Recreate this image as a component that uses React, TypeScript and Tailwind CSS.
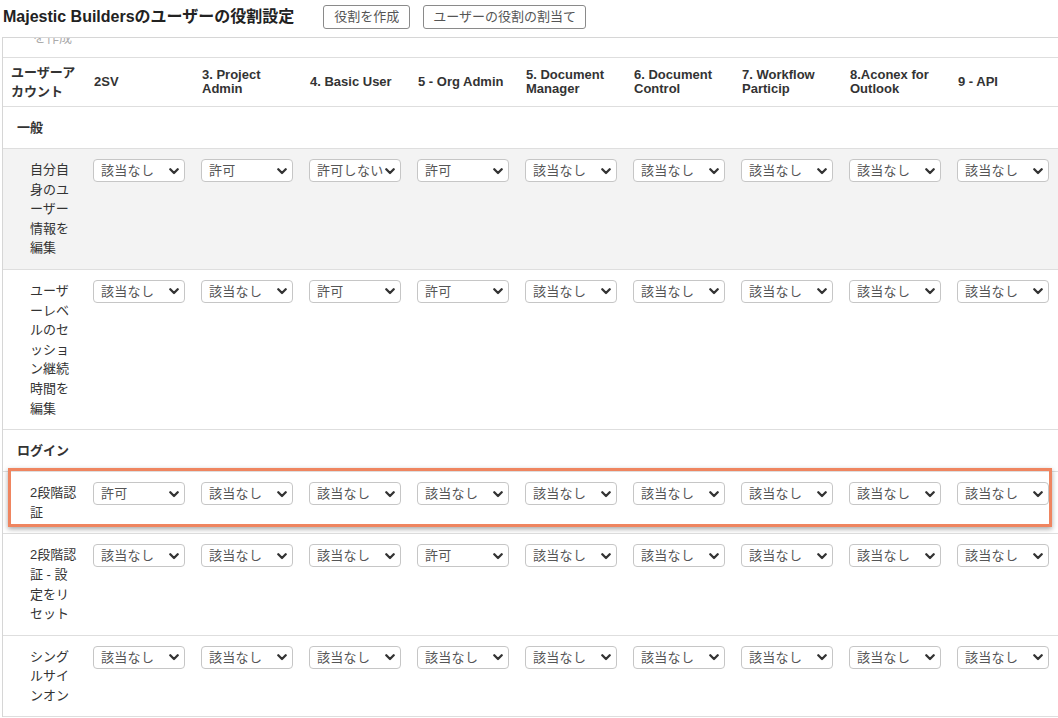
import React from "react";

const font = "font-['Liberation_Sans','Noto_Sans_CJK_JP',sans-serif]";

const columns = [
  "2SV",
  "3. Project Admin",
  "4. Basic User",
  "5 - Org Admin",
  "5. Document Manager",
  "6. Document Control",
  "7. Workflow Particip",
  "8.Aconex for Outlook",
  "9 - API",
];

const N = "該当なし";
const Y = "許可";

type Row =
  | { kind: "section"; label: string }
  | { kind: "perm"; label: string; values: string[]; shaded?: boolean; marked?: boolean };

const rows: Row[] = [
  { kind: "section", label: "一般" },
  {
    kind: "perm",
    label: "自分自身のユーザー情報を編集",
    values: [N, Y, "許可しない", Y, N, N, N, N, N],
    shaded: true,
  },
  {
    kind: "perm",
    label: "ユーザーレベルのセッション継続時間を編集",
    values: [N, N, Y, Y, N, N, N, N, N],
  },
  { kind: "section", label: "ログイン" },
  {
    kind: "perm",
    label: "2段階認証",
    values: [Y, N, N, N, N, N, N, N, N],
    marked: true,
  },
  {
    kind: "perm",
    label: "2段階認証 - 設定をリセット",
    values: [N, N, N, Y, N, N, N, N, N],
  },
  {
    kind: "perm",
    label: "シングルサインオン",
    values: [N, N, N, N, N, N, N, N, N],
  },
];

function Select({ value }: { value: string }) {
  return (
    <div className="flex items-center justify-between gap-[2px] w-[92px] h-[23px] border border-[#c6c6c6] rounded-[4px] bg-white pl-[7px] pr-[5px]">
      <span className="text-[13px] text-[#555] tracking-[0.3px] leading-none whitespace-nowrap overflow-hidden">
        {value}
      </span>
      <svg width="10" height="7" viewBox="0 0 10 7" className="shrink-0 mt-[1px]">
        <path d="M1.3 1.3 L5 5 L8.7 1.3" fill="none" stroke="#333" strokeWidth="2.3" strokeLinecap="round" strokeLinejoin="round" />
      </svg>
    </div>
  );
}

export default function App() {
  return (
    <div className={`w-[1058px] h-[718px] overflow-hidden bg-white text-[#333] ${font}`}>
      {/* Title bar */}
      <div className="flex items-center h-[37px] pb-[4px] pl-[3px]">
        <h1 className="text-[16px] font-bold text-[#222] whitespace-nowrap">
          Majestic Buildersのユーザーの役割設定
        </h1>
        <button className="ml-[29px] h-[24px] px-[10px] border border-[#8a8a8a] rounded-[3px] text-[13px] text-[#555] bg-white">
          役割を作成
        </button>
        <button className="ml-[13px] h-[24px] px-[9px] border border-[#8a8a8a] rounded-[3px] text-[13px] text-[#555] bg-white">
          ユーザーの役割の割当て
        </button>
      </div>

      {/* Table area */}
      <div className="ml-[2px] border-t border-l border-[#d6d6d6] overflow-hidden">
        {/* row scrolled off the top */}
        <div className="h-[20px] overflow-hidden border-b border-[#dedede]">
          <div className="pl-[30px] -mt-[10px] text-[13px] leading-[19px] text-[#aaa]">を作成</div>
        </div>

        {/* Column headers */}
        <div className="grid grid-cols-[90px_repeat(9,108px)] h-[49px] border-b border-[#dedede] items-center">
          <div className="pl-[8px] pr-[10px] text-[13px] font-bold leading-[19px] [line-break:anywhere]">
            ユーザーアカウント
          </div>
          {columns.map((c) => (
            <div key={c} className="pl-[1px] pr-[16px] text-[13px] font-bold leading-[14px] text-[#333]">
              {c}
            </div>
          ))}
        </div>

        {rows.map((row, i) =>
          row.kind === "section" ? (
            <div
              key={i}
              className="flex items-center h-[42px] pl-[14px] border-b border-[#dedede] text-[13px] font-bold"
            >
              {row.label}
            </div>
          ) : (
            <div
              key={i}
              className={`relative grid grid-cols-[90px_repeat(9,108px)] items-start pt-[10px] pb-[11px] border-b border-[#dedede] ${
                row.shaded ? "bg-[#f3f3f3]" : "bg-white"
              }`}
            >
              <div className="pl-[27px] mt-[1px]">
                <div className="w-[48px] text-[13px] leading-[19.6px] text-[#333] [line-break:anywhere]">
                  {row.label}
                </div>
              </div>
              {row.values.map((v, j) => (
                <div key={j}>
                  <Select value={v} />
                </div>
              ))}
              {row.marked && (
                <div className="absolute left-[5px] top-[-4px] w-[1044px] bottom-[6px] border-[3px] border-[#ef8560] shadow-[0_2px_5px_rgba(0,0,0,0.35)] pointer-events-none" />
              )}
            </div>
          )
        )}
      </div>
    </div>
  );
}
